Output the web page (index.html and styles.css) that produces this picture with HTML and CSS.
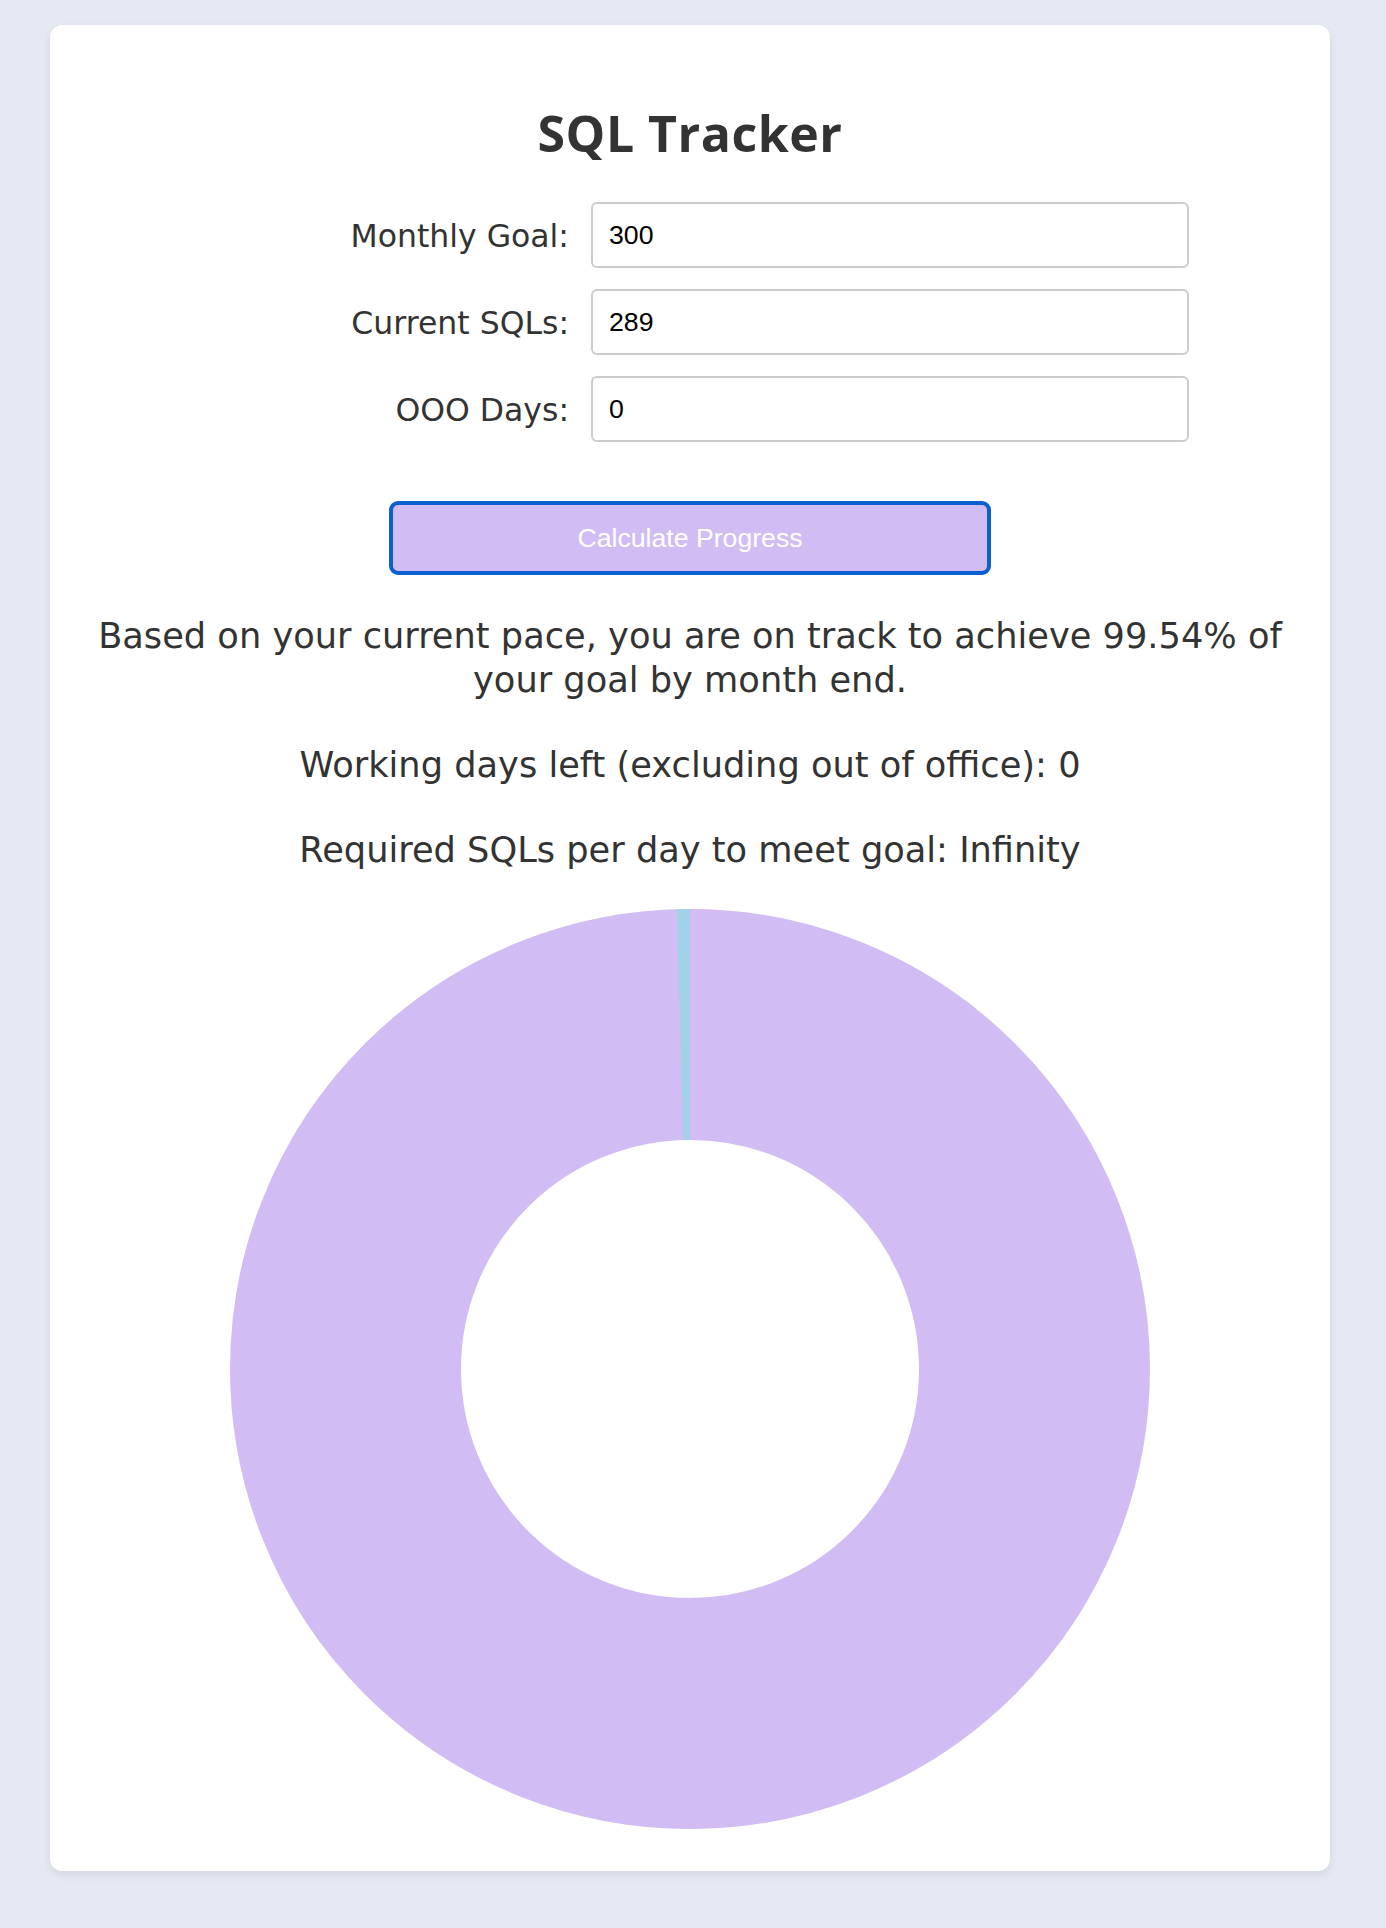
FILE: index.html
```html
<!DOCTYPE html>
<html lang="en">
<head>
<meta charset="utf-8">
<title>SQL Tracker</title>
<link rel="stylesheet" href="styles.css">
</head>
<body>
<main class="card">
  <h1 class="title">SQL Tracker</h1>
  <form class="form">
    <label class="label" for="goal">Monthly Goal:</label>
    <input class="field" id="goal" type="text" value="300">
    <label class="label" for="current">Current SQLs:</label>
    <input class="field" id="current" type="text" value="289">
    <label class="label" for="ooo">OOO Days:</label>
    <input class="field" id="ooo" type="text" value="0">
  </form>
  <div class="actions">
    <button class="btn" type="button">Calculate Progress</button>
  </div>
  <p class="result result-main">Based on your current pace, you are on track to achieve 99.54% of your goal by month end.</p>
  <p class="result">Working days left (excluding out of office): 0</p>
  <p class="result">Required SQLs per day to meet goal: Infinity</p>
  <div class="chart">
    <svg class="donut" width="922" height="922" viewBox="0 0 922 922">
      <circle cx="461" cy="461" r="344.5" fill="none" stroke="#d1bdf3" stroke-width="231"/>
      <path d="M 447.71 1.19 A 460 460 0 0 1 461 1 L 461 232 A 229 229 0 0 0 454.38 232.10 Z" fill="#a2d2e8"/>
    </svg>
  </div>
</main>
</body>
</html>
```

FILE: styles.css
```css
html, body {
  margin: 0;
  padding: 0;
}
body {
  background: #e5e9f4;
  font-family: "DejaVu Sans", "Open Sans", sans-serif;
  color: #333333;
  padding: 25px 0 56px 50px;
}
.card {
  box-sizing: border-box;
  width: 1280px;
  background: #ffffff;
  border-radius: 12px;
  box-shadow: 0 4px 10px rgba(0, 0, 0, 0.08);
  padding: 84px 25px 41px;
  display: flex;
  flex-direction: column;
  align-items: center;
}
.title {
  margin: 0;
  font-family: "Open Sans", sans-serif;
  font-size: 50px;
  line-height: 48px;
  font-weight: 700;
  color: #333333;
  letter-spacing: 0.5px;
}
.form {
  margin-top: 45px;
  display: grid;
  grid-template-columns: 378px 598px;
  column-gap: 22px;
  row-gap: 21px;
  align-items: center;
}
.label {
  text-align: right;
  font-size: 31.5px;
  color: #333333;
  padding-top: 2px;
}
.field {
  box-sizing: border-box;
  height: 66px;
  width: 598px;
  border: 2px solid #cccccc;
  border-radius: 6px;
  padding: 0 16px;
  font-family: "Liberation Sans", Arial, sans-serif;
  font-size: 26.67px;
  color: #000000;
  background: #ffffff;
}
.actions {
  margin-top: 59px;
}
.btn {
  box-sizing: border-box;
  width: 602px;
  height: 74px;
  background: #d1bdf3;
  border: 4px solid #0a5fd1;
  border-radius: 9px;
  color: #ffffff;
  font-family: "Liberation Sans", Arial, sans-serif;
  font-size: 26.67px;
}
.result {
  margin: 39px 0 0;
  font-size: 35.2px;
  line-height: 44px;
  text-align: center;
  color: #333333;
}
.result-main {
  max-width: 1230px;
}
.result + .result {
  margin-top: 41px;
}
.chart {
  margin-top: 36px;
}
.donut {
  display: block;
}
```
